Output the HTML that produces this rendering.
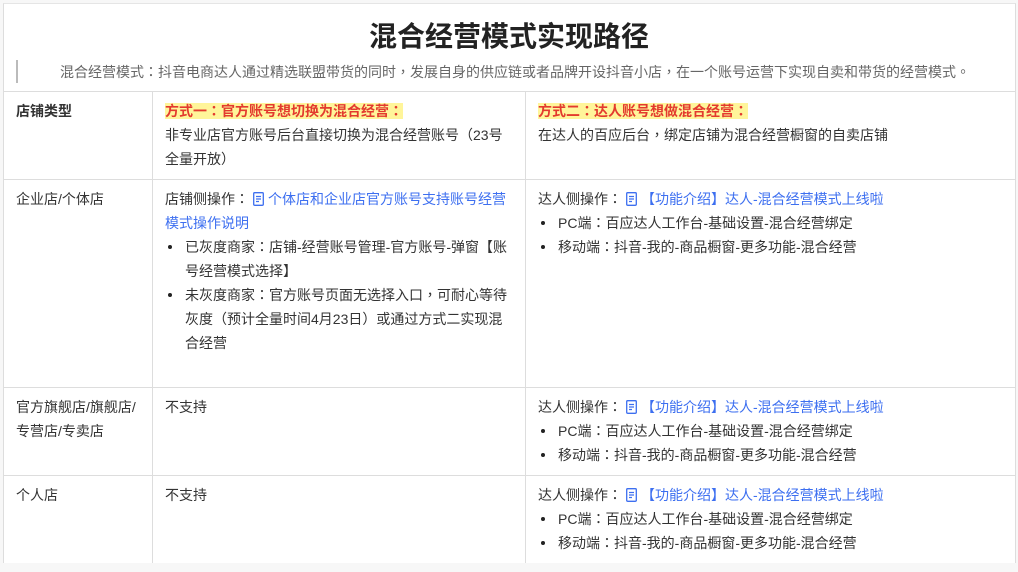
<!DOCTYPE html>
<html><head><meta charset="utf-8"><style>
*{margin:0;padding:0;box-sizing:border-box}
body{width:1018px;height:572px;background:#f7f7f7;position:relative;overflow:hidden;font-family:"Liberation Sans","Noto Sans CJK SC",sans-serif;color:#333;font-size:14px}
#card{position:absolute;left:3px;top:3px;width:1013px;height:560px;background:#fff;border-left:1px solid #ddd;border-right:1px solid #ddd;border-top:1px solid #e5e5e5}
.h{position:absolute;background:#ddd;height:1px}
.v{position:absolute;background:#ddd;width:1px}
.t{position:absolute;line-height:24px;white-space:nowrap}
h1{position:absolute;left:0;width:1018px;top:17px;text-align:center;font-size:28px;line-height:40px;font-weight:bold;color:#222}
.sub{position:absolute;left:60px;top:61px;font-size:14px;color:#666;line-height:22px;white-space:nowrap}
.bar{position:absolute;left:16px;top:60px;width:2px;height:23px;background:#bbb}
.hl{background:#fff59a;color:#e33a2e;font-weight:bold}
.a{color:#3d6ff0}
.b{position:relative;padding-left:20px}
.b:before{content:"";position:absolute;left:3px;top:10px;width:4px;height:4px;border-radius:2px;background:#222}
.ic{display:inline-block;width:11px;height:14px;vertical-align:-2px;margin:0 4px 0 4px}
i{font-style:normal;display:inline-block;width:1em;text-align:center;font-family:"Noto Sans CJK TC",sans-serif}
</style></head><body>
<div id="card"></div>
<h1>混合经营模式实现路径</h1>
<div class="bar"></div>
<div class="sub">混合经营模式<i>：</i>抖音电商达人通过精选联盟带货的同时<i>，</i>发展自身的供应链或者品牌开设抖音小店<i>，</i>在一个账号运营下实现自卖和带货的经营模式<i>。</i></div>
<div class="h" style="left:3px;width:1013px;top:91px"></div>
<div class="h" style="left:3px;width:1013px;top:179px"></div>
<div class="h" style="left:3px;width:1013px;top:387px"></div>
<div class="h" style="left:3px;width:1013px;top:475px"></div>
<div class="v" style="left:152px;top:91px;height:472px"></div>
<div class="v" style="left:525px;top:91px;height:472px"></div>

<div class="t" style="left:16px;top:99px;font-weight:bold">店铺类型</div>
<div class="t" style="left:165px;top:99px"><span class="hl">方式一<i>：</i>官方账号想切换为混合经营<i>：</i></span><br>非专业店官方账号后台直接切换为混合经营账号<i>（</i>23号<br>全量开放<i>）</i></div>
<div class="t" style="left:538px;top:99px"><span class="hl">方式二<i>：</i>达人账号想做混合经营<i>：</i></span><br>在达人的百应后台<i>，</i>绑定店铺为混合经营橱窗的自卖店铺</div>

<div class="t" style="left:16px;top:187px">企业店/个体店</div>
<div class="t" style="left:165px;top:187px">店铺侧操作<i>：</i><svg class="ic" viewBox="0 0 11 14"><rect x="0.7" y="0.7" width="9.6" height="12.6" rx="1" fill="none" stroke="#3d6ff0" stroke-width="1.3"/><path d="M3 4.5h5M3 7h5M3 9.5h3" stroke="#3d6ff0" stroke-width="1.2"/></svg><span class="a">个体店和企业店官方账号支持账号经营<br>模式操作说明</span>
<div class="b">已灰度商家<i>：</i>店铺-经营账号管理-官方账号-弹窗【账<br>号经营模式选择】</div>
<div class="b">未灰度商家<i>：</i>官方账号页面无选择入口<i>，</i>可耐心等待<br>灰度<i>（</i>预计全量时间4月23日<i>）</i>或通过方式二实现混<br>合经营</div></div>
<div class="t" style="left:538px;top:187px">达人侧操作<i>：</i><svg class="ic" viewBox="0 0 11 14"><rect x="0.7" y="0.7" width="9.6" height="12.6" rx="1" fill="none" stroke="#3d6ff0" stroke-width="1.3"/><path d="M3 4.5h5M3 7h5M3 9.5h3" stroke="#3d6ff0" stroke-width="1.2"/></svg><span class="a">【功能介绍】达人-混合经营模式上线啦</span>
<div class="b">PC端<i>：</i>百应达人工作台-基础设置-混合经营绑定</div>
<div class="b">移动端<i>：</i>抖音-我的-商品橱窗-更多功能-混合经营</div></div>

<div class="t" style="left:16px;top:395px">官方旗舰店/旗舰店/<br>专营店/专卖店</div>
<div class="t" style="left:165px;top:395px">不支持</div>
<div class="t" style="left:538px;top:395px">达人侧操作<i>：</i><svg class="ic" viewBox="0 0 11 14"><rect x="0.7" y="0.7" width="9.6" height="12.6" rx="1" fill="none" stroke="#3d6ff0" stroke-width="1.3"/><path d="M3 4.5h5M3 7h5M3 9.5h3" stroke="#3d6ff0" stroke-width="1.2"/></svg><span class="a">【功能介绍】达人-混合经营模式上线啦</span>
<div class="b">PC端<i>：</i>百应达人工作台-基础设置-混合经营绑定</div>
<div class="b">移动端<i>：</i>抖音-我的-商品橱窗-更多功能-混合经营</div></div>

<div class="t" style="left:16px;top:483px">个人店</div>
<div class="t" style="left:165px;top:483px">不支持</div>
<div class="t" style="left:538px;top:483px">达人侧操作<i>：</i><svg class="ic" viewBox="0 0 11 14"><rect x="0.7" y="0.7" width="9.6" height="12.6" rx="1" fill="none" stroke="#3d6ff0" stroke-width="1.3"/><path d="M3 4.5h5M3 7h5M3 9.5h3" stroke="#3d6ff0" stroke-width="1.2"/></svg><span class="a">【功能介绍】达人-混合经营模式上线啦</span>
<div class="b">PC端<i>：</i>百应达人工作台-基础设置-混合经营绑定</div>
<div class="b">移动端<i>：</i>抖音-我的-商品橱窗-更多功能-混合经营</div></div>
</body></html>
